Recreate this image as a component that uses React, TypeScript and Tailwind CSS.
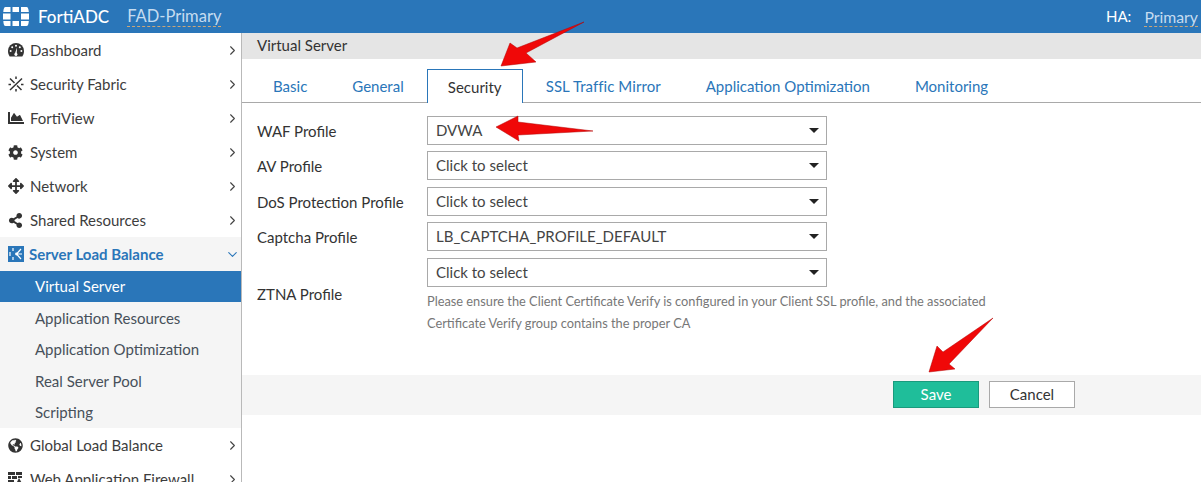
import { ChevronDown, ChevronRight } from "lucide-react";
import { FaArrowsAlt, FaChartArea, FaCog, FaGlobeAmericas, FaShareAlt } from "react-icons/fa";
import type { ReactNode } from "react";

function Logo() {
  return (
    <svg width="26" height="20" viewBox="0 0 26 20" fill="white">
      <path d="M2.500 0H7.500V5H0.300C0.500 2 1 0 2.500 0z" />
      <rect x="9.500" y="0" width="6.500" height="5" />
      <path d="M18 0H23.500C25 0 25.600 2 25.800 5H18z" />
      <rect x="0" y="6.500" width="7.500" height="6" />
      <rect x="18" y="6.500" width="8" height="6" />
      <path d="M0.300 14H7.500V19H2.500C1 19 0.500 17 0.300 14z" />
      <rect x="9.500" y="14" width="6.500" height="5" />
      <path d="M18 14H25.800C25.600 17 25 19 23.500 19H18z" />
    </svg>
  );
}

function DashboardIcon() {
  return (
    <svg width="16" height="14" viewBox="0 0 16 14">
      <path d="M8 0a8 8 0 0 1 8 8c0 2.200-.6 4-1.700 5.500H1.700C.6 12 0 10.200 0 8a8 8 0 0 1 8-8z" fill="#333" />
      <circle cx="8" cy="2.700" r="1" fill="white" />
      <circle cx="4.200" cy="4.300" r="1" fill="white" />
      <circle cx="11.800" cy="4.300" r="1" fill="white" />
      <circle cx="2.600" cy="8" r="1" fill="white" />
      <circle cx="13.400" cy="8" r="1" fill="white" />
      <path d="M9 4.500l-.2 5.500a1.600 1.600 0 1 1-1.700-.1z" fill="white" />
    </svg>
  );
}

function FabricIcon() {
  return (
    <svg width="16" height="16" viewBox="0 0 16 16" stroke="#333" strokeWidth="1.500" fill="none">
      <path d="M2 2.500l4.500 4.500M9 9.500l4.500 4.500M2 14L14 2.500M8 .5v2.500M.5 8.500H3M15.500 8.500H13M8 13v2.500" />
    </svg>
  );
}

function LoadBalanceIcon() {
  return (
    <svg width="16" height="16" viewBox="0 0 16 16">
      <rect width="16" height="16" fill="#2a76b9" />
      <path d="M13 3L8.500 8l4.500 5M8.500 8H14M5 2v3M5 11v3M2 6v4" stroke="white" strokeWidth="1.200" fill="none" />
      <circle cx="8.500" cy="8" r="1.400" fill="white" />
    </svg>
  );
}

function WafIcon() {
  return (
    <svg width="16" height="16" viewBox="0 0 16 16" fill="#333">
      <path d="M0 1h7v3H0zM8 1h6v3H8zM0 5h3v3H0zM4 5h5v3H4zM10 5h4v2h-4zM0 9h6v3H0zM11 7l4.500 8H7z" />
    </svg>
  );
}

type MenuRowProps = {
  icon: ReactNode;
  label: string;
};

function MenuRow({ icon, label }: MenuRowProps) {
  return (
    <div className="flex h-[34px] items-center pl-2 pr-[1px] text-[#3d3d3d]">
      <span className="flex w-[22px] shrink-0 items-center">{icon}</span>
      <span className="flex-1 whitespace-nowrap">{label}</span>
      <ChevronRight size={15} strokeWidth={1.750} className="text-[#444]" />
    </div>
  );
}

function Sidebar() {
  const subItems = ["Application Resources", "Application Optimization", "Real Server Pool", "Scripting"];
  return (
    <aside className="w-[242px] shrink-0 overflow-hidden border-r border-[#b9b9b9] bg-white">
      <MenuRow icon={<DashboardIcon />} label="Dashboard" />
      <MenuRow icon={<FabricIcon />} label="Security Fabric" />
      <MenuRow icon={<FaChartArea size={16} color="#333" />} label="FortiView" />
      <MenuRow icon={<FaCog size={15} color="#333" />} label="System" />
      <MenuRow icon={<FaArrowsAlt size={16} color="#333" />} label="Network" />
      <MenuRow icon={<FaShareAlt size={15} color="#333" />} label="Shared Resources" />
      <div className="bg-[#f5f5f5]">
        <div className="flex h-[34px] items-center pl-2 pr-[1px]">
          <span className="flex w-[21px] shrink-0 items-center"><LoadBalanceIcon /></span>
          <span className="flex-1 font-bold text-[#2a76b9]">Server Load Balance</span>
          <ChevronDown size={15} strokeWidth={1.750} className="text-[#2a76b9]" />
        </div>
        <div className="flex h-[31px] items-center bg-[#2a76b9] pl-[35px] text-white">Virtual Server</div>
        {subItems.map((item) => (
          <div key={item} className="flex h-[31.500px] items-center pl-[35px] text-[#47505a]">{item}</div>
        ))}
      </div>
      <MenuRow icon={<FaGlobeAmericas size={15} color="#333" />} label="Global Load Balance" />
      <MenuRow icon={<WafIcon />} label="Web Application Firewall" />
    </aside>
  );
}

function Tabs() {
  const before = ["Basic", "General"];
  const after = ["Application Optimization", "Monitoring"];
  return (
    <div className="mt-[10px] flex h-[34px] gap-px border-b border-[#a9a9a9] pl-[9px]">
      {before.map((tab) => (
        <div key={tab} className="flex items-center px-[22px] pt-[2px] text-[#2a76b9]">{tab}</div>
      ))}
      <div className="mb-[-1px] flex w-[96px] items-center justify-center border border-b-0 border-[#2a76b9] bg-white pt-[2px] text-[#333]">
        Security
      </div>
      <div className="flex items-center whitespace-nowrap px-[22px] pt-[2px] tracking-[0.060px] text-[#2a76b9]">SSL Traffic Mirror</div>
      {after.map((tab) => (
        <div key={tab} className="flex items-center whitespace-nowrap px-[22px] pt-[2px] text-[#2a76b9]">{tab}</div>
      ))}
    </div>
  );
}

function SelectBox({ value }: { value: string }) {
  return (
    <div className="flex h-[29px] w-[400px] items-center justify-between border border-[#a9a9a9] bg-white pb-px pl-[8px] pr-[7px] text-[#444]">
      <span>{value}</span>
      <span className="mt-[1px] h-0 w-0 border-x-[5px] border-t-[5px] border-x-transparent border-t-[#222]" />
    </div>
  );
}

function Row({ label, value, className }: { label: string; value: string; className: string }) {
  return (
    <div className={`flex items-center ${className}`}>
      <label className="w-[170px] shrink-0 pt-[1px] text-[#333]">{label}</label>
      <SelectBox value={value} />
    </div>
  );
}

function Arrow({ points }: { points: string }) {
  return (
    <svg className="pointer-events-none absolute left-0 top-0" width="1201" height="482" viewBox="0 0 1201 482">
      <polygon points={points} fill="#f00808" stroke="#b30000" strokeWidth="0.500" />
    </svg>
  );
}

export default function App() {
  return (
    <div className="relative h-[482px] w-[1201px] overflow-hidden bg-white font-['Lato','Open_Sans',sans-serif] text-[15px]">
      <header className="flex h-[33px] items-center bg-[#2a76b9] pl-[3px] pr-[3px]">
        <Logo />
        <span className="ml-[9px] text-[17px] font-medium text-white">FortiADC</span>
        <span className="ml-[18px] border-b border-dashed border-[#c9a67a] text-[16.500px] leading-[19px] text-[#c5dcf0]">FAD-Primary</span>
        <div className="ml-auto flex items-center text-[15px]">
          <span className="text-white">HA:</span>
          <span className="ml-[13px] border-b border-dashed border-[#c9a67a] text-[15.800px] leading-[19px] text-[#c5dcf0]">Primary</span>
        </div>
      </header>
      <div className="flex h-[449px]">
        <Sidebar />
        <main className="min-w-0 flex-1">
          <div className="flex h-[26px] items-center bg-[#e5e5e5] pb-[2px] pl-[15px] text-[#333]">Virtual Server</div>
          <Tabs />
          <section className="flex flex-col pl-[15px] pt-[13px]">
            <Row label="WAF Profile" value="DVWA" className="" />
            <Row label="AV Profile" value="Click to select" className="mt-[6px]" />
            <Row label="DoS Protection Profile" value="Click to select" className="mt-[7px]" />
            <Row label="Captcha Profile" value="LB_CAPTCHA_PROFILE_DEFAULT" className="mt-[6px]" />
            <div className="mt-[7px] flex items-center">
              <label className="w-[170px] shrink-0 pb-[4px] text-[#333]">ZTNA Profile</label>
              <div>
                <SelectBox value="Click to select" />
                <p className="mt-[3px] w-[580px] text-[12.800px] leading-[22px] text-[#777]">
                  Please ensure the Client Certificate Verify is configured in your Client SSL profile, and the associated Certificate Verify group contains the proper CA
                </p>
              </div>
            </div>
          </section>
          <div className="mt-[41px] flex h-[40px] items-center justify-end gap-[10px] bg-[#f5f5f5] pb-px pr-[126px]">
            <button className="h-[27px] w-[86px] border border-[#1a9a7d] bg-[#1fbe9a] text-white">Save</button>
            <button className="h-[27px] w-[86px] border border-[#a9a9a9] bg-white text-[#333]">Cancel</button>
          </div>
        </main>
      </div>
      <Arrow points="584,22 526,53 536,62 501,66 510,43 517,48" />
      <Arrow points="593,131 518,135 519,141 496,127 518,116 518,122" />
      <Arrow points="993,318 949,364 955,369 929,372 937,346 943,352" />
    </div>
  );
}
